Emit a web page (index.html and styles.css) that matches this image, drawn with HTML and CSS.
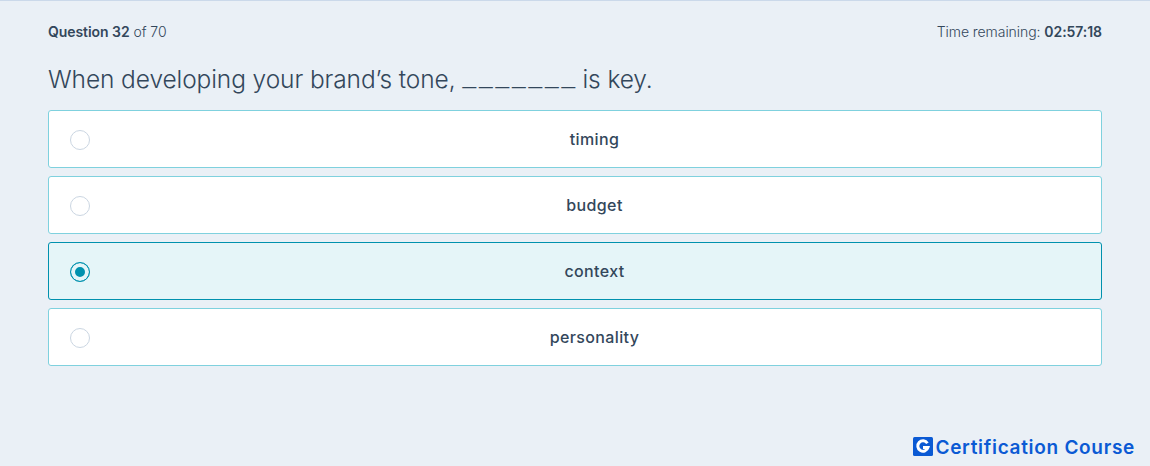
FILE: index.html
```html
<!DOCTYPE html>
<html lang="en">
<head>
<meta charset="utf-8">
<title>Certification exam</title>
<link rel="stylesheet" href="styles.css">
</head>
<body>
<main class="exam">
  <header class="status">
    <p class="status-text"><strong>Question 32</strong> of 70</p>
    <p class="status-text">Time remaining: <strong>02:57:18</strong></p>
  </header>
  <h1 class="question">When developing your brand’s tone, <span class="blank">_______</span> is key.</h1>
  <div class="options">
    <div class="option"><span class="radio"></span><span class="label">timing</span></div>
    <div class="option"><span class="radio"></span><span class="label">budget</span></div>
    <div class="option selected"><span class="radio"></span><span class="label">context</span></div>
    <div class="option"><span class="radio"></span><span class="label">personality</span></div>
  </div>
</main>
<footer class="brand">
  <svg class="brand-icon" width="20" height="19" viewBox="0 0 20 19" aria-hidden="true">
    <rect width="20" height="19" rx="1.5" fill="#0b5ad4"/>
    <path d="M14.4 6.2A5.2 5.2 0 1 0 15 10.4H10" fill="none" stroke="#fff" stroke-width="3"/>
  </svg>
  <span class="brand-name">Certification Course</span>
</footer>
</body>
</html>
```
FILE: styles.css
```css
* { box-sizing: border-box; }
html, body { height: 100%; }
body {
  margin: 0;
  display: flex;
  flex-direction: column;
  justify-content: space-between;
  overflow: hidden;
  background: #eaf0f6;
  border-top: 1px solid #cbd9ea;
  color: #33475b;
  font-family: "Inter", "Liberation Sans", sans-serif;
}
.exam { padding: 22px 48px 0; }
.status { display: flex; justify-content: space-between; }
.status-text { margin: 0; font-size: 14px; line-height: 18px; font-weight: 300; letter-spacing: -0.06px; }
.status-text strong { font-weight: 600; }
.question { margin: 20px 0 13px; font-size: 24.5px; line-height: 36px; font-weight: 300; letter-spacing: -0.1px; }
.blank { font-size: 32px; line-height: 0; font-weight: 200; letter-spacing: 2.4px; margin-right: -2px; vertical-align: 1px; }
.options { display: flex; flex-direction: column; gap: 8px; }
.option {
  display: flex;
  align-items: center;
  height: 58px;
  padding-left: 21px;
  background: #fff;
  border: 1px solid #7fd1de;
  border-radius: 3px;
}
.option.selected { background: #e5f5f8; border-color: #0091ae; }
.radio { flex: none; width: 20px; height: 20px; margin-top: 2px; border: 1px solid #cbd6e2; border-radius: 50%; background: #fff; }
.selected .radio { border-color: #0091ae; background: #0091ae; box-shadow: inset 0 0 0 4px #e5f5f8; }
.label { flex: 1; padding-right: 2px; text-align: center; font-size: 16px; font-weight: 500; letter-spacing: 0.38px; }
.brand { display: flex; align-items: flex-start; gap: 2px; padding: 0 15px 8px 0; justify-content: flex-end; }
.brand-icon { margin-top: -1px; }
.brand-name { font-size: 19px; line-height: 20px; font-weight: 600; color: #0b5ad4; letter-spacing: 0.7px; }
```
